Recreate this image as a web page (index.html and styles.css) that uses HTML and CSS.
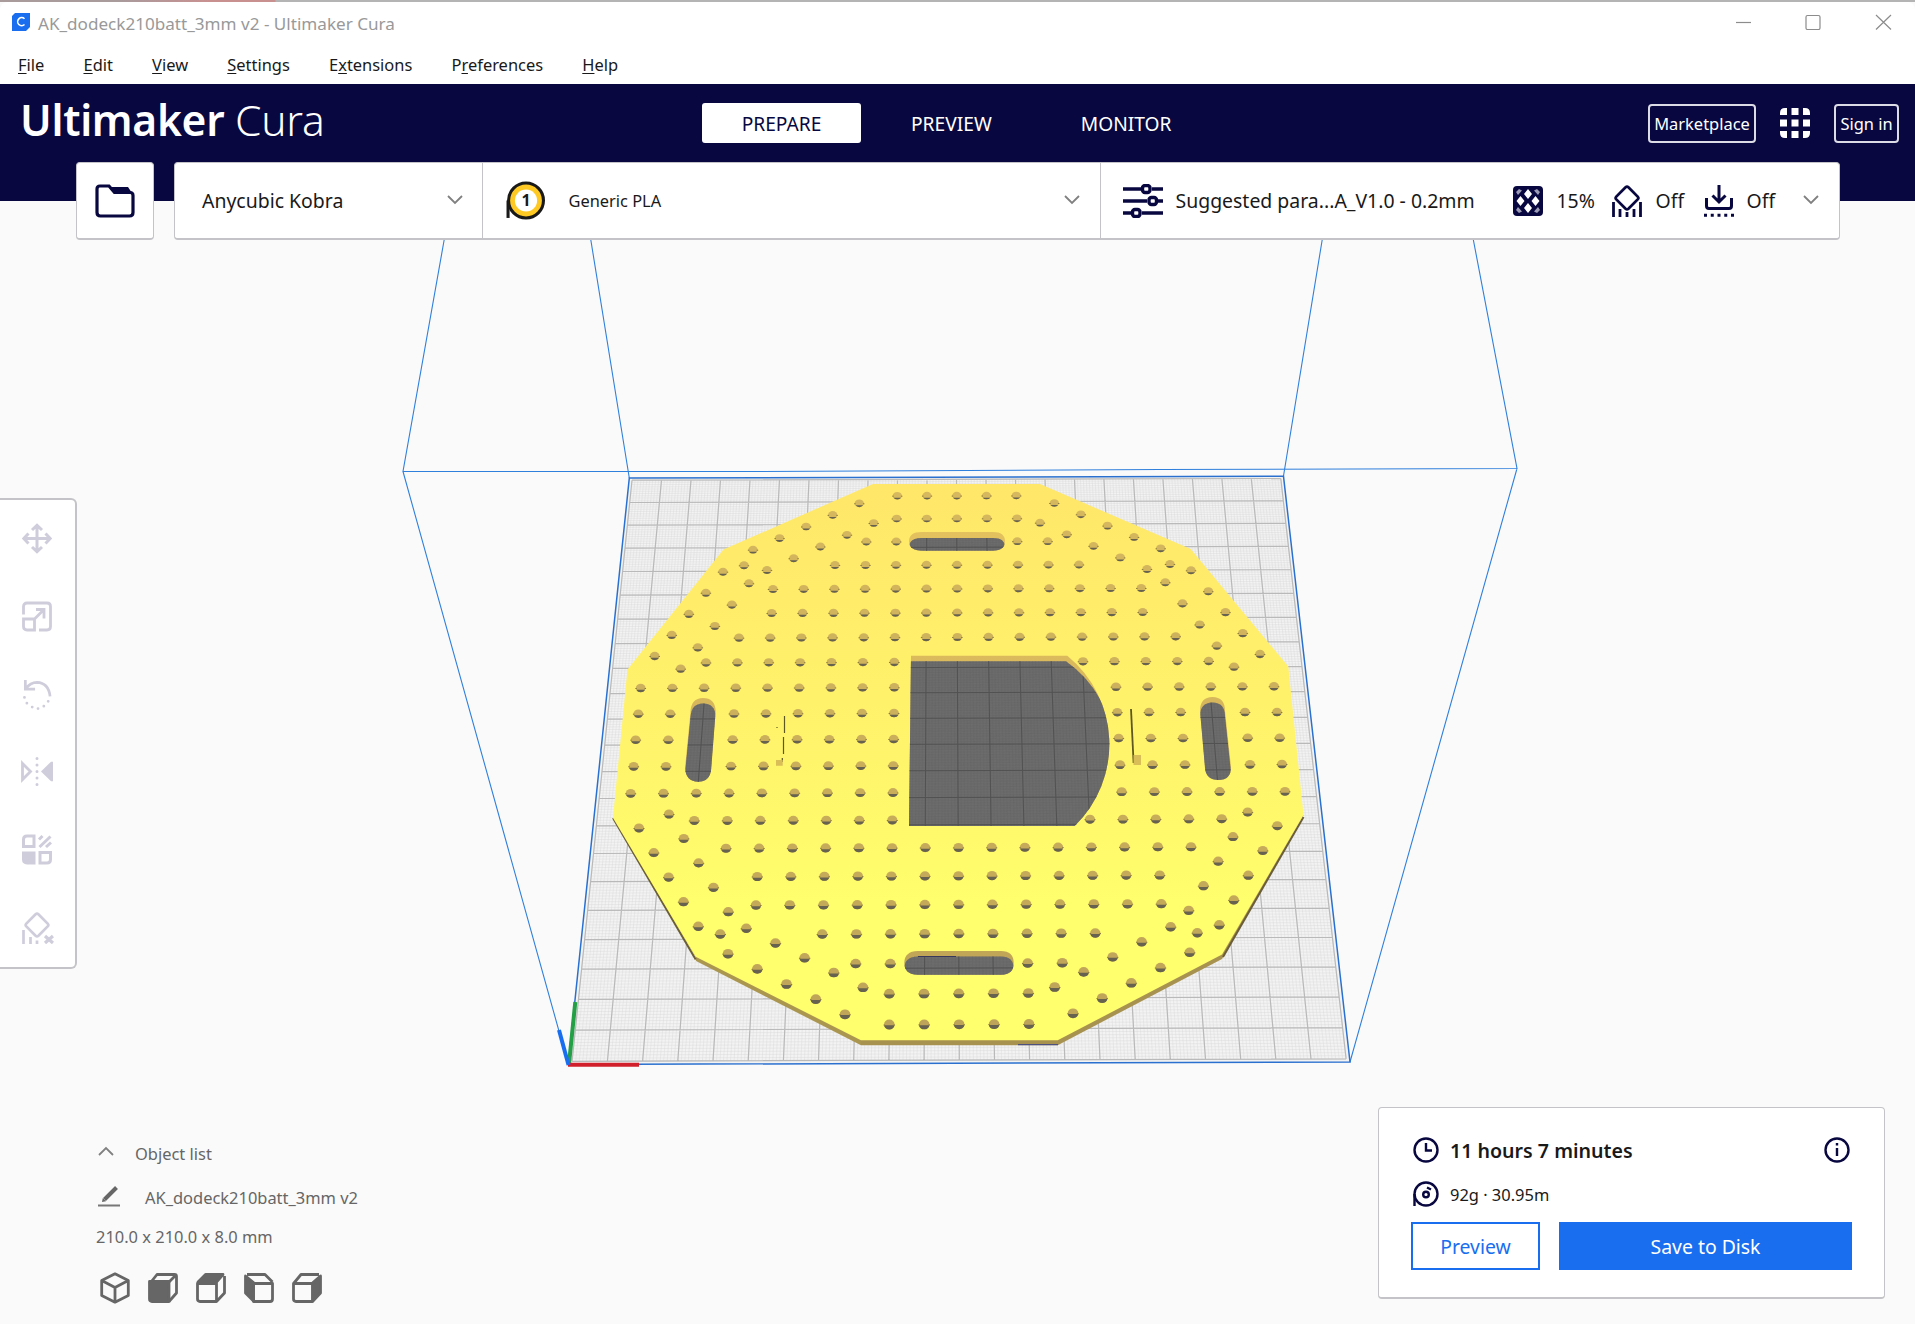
FILE: index.html
```html
<!DOCTYPE html>
<html lang="en">
<head>
<meta charset="utf-8">
<title>AK_dodeck210batt_3mm v2 - Ultimaker Cura</title>
<link rel="stylesheet" href="styles.css">
</head>
<body>
<div class="edge"></div>
<header class="titlebar">
  <svg class="app-icon" viewBox="0 0 18 18"><path d="M3 0H18V14L14 18H0V3Z" fill="#196ef0"/><path d="M12.5 5.8A4 4 0 1 0 12.5 11.5" fill="none" stroke="#fff" stroke-width="1.6"/></svg>
  <span class="window-title">AK_dodeck210batt_3mm v2 - Ultimaker Cura</span>
  <svg class="window-controls" viewBox="0 0 156 16" fill="none" stroke="#8c8c8c" stroke-width="1.2"><path d="M0 8.500H15"/><rect x="70" y="1.500" width="14" height="14" rx="1.5"/><path d="M140 1L155 15.500M155 1L140 15.500"/></svg>
</header>
<nav class="menubar">
  <span><u>F</u>ile</span><span><u>E</u>dit</span><span><u>V</u>iew</span><span><u>S</u>ettings</span><span>E<u>x</u>tensions</span><span>P<u>r</u>eferences</span><span><u>H</u>elp</span>
</nav>
<div class="appbar">
  <div class="logo"><b>Ultimaker</b> <span>Cura</span></div>
  <div class="stages"><span class="stage active">PREPARE</span><span class="stage">PREVIEW</span><span class="stage">MONITOR</span></div>
  <div class="account">
    <span class="outlined market">Marketplace</span>
    <svg class="apps" viewBox="0 0 30 30" fill="#fff"><path d="M0 7V5Q0 0 5 0H7V7ZM11.500 0H18.500V7H11.500ZM23 0H25Q30 0 30 5V7H23ZM0 11.500H7V18.500H0ZM11.500 11.500H18.500V18.500H11.500ZM23 11.500H30V18.500H23ZM0 23H7V30H5Q0 30 0 25ZM11.500 23H18.500V30H11.500ZM23 23H30V25Q30 30 25 30H23Z"/></svg>
    <span class="outlined signin">Sign in</span>
  </div>
</div>
<main class="workspace">
  <svg class="scene" id="scene" viewBox="0 162 1915 1162">
    <defs>
      <linearGradient id="plate" x1="0" y1="484" x2="0" y2="1040" gradientUnits="userSpaceOnUse"><stop offset="0" stop-color="#ffe769"/><stop offset=".5" stop-color="#fff56b"/><stop offset=".75" stop-color="#fffe6c"/><stop offset="1" stop-color="#ffff6d"/></linearGradient>
      <linearGradient id="wall" x1="0" y1="484" x2="0" y2="1040" gradientUnits="userSpaceOnUse"><stop offset="0" stop-color="#e6c55f"/><stop offset=".5" stop-color="#d3b35a"/><stop offset="1" stop-color="#b9a055"/></linearGradient>
      <clipPath id="cutouts">
        <path id="window" d="M911 655.700H1067.300A114 114 0 0 1 1074.700 826H909Z"/>
        <path id="slotTop" d="M922 532H993Q1005 532 1005 541.300T993 550.700H922Q909 550.700 909 541.300T922 532Z"/>
        <path id="slotBottom" d="M918 951H1001Q1013.700 951 1013.700 963T1001 974.700H918Q904.300 974.700 904.300 963T918 951Z"/>
        <path id="slotLeft" d="M690.500 712Q691 698 703 698T715.700 711L711.200 769Q710 781.700 698 781.700T685 768Z"/>
        <path id="slotRight" d="M1200 711Q1200 697 1212.500 697T1225 711L1231 767Q1231 780 1218.500 780T1205 768Z"/>
      </clipPath>
      <clipPath id="floors">
        <path d="M908 661.200H1066A114 114 0 0 1 1076 840H900Z"/>
        <use href="#slotTop" y="6"/><use href="#slotBottom" y="5.500"/><use href="#slotLeft" y="5.500"/><use href="#slotRight" y="5.500"/>
      </clipPath>
    </defs>
    <g id="bed"></g>
    <g fill="none" stroke="#2f7fdc" stroke-width="1.1">
      <path d="M444.500 238L403 471.500H760L1160 469.500L1517 468.500L1473 238M403 471.500L568.300 1064.500M1517 468.500L1350 1062M590.500 238L629.300 478M1322.500 238L1283.500 476"/>
      <path d="M629.300 478L1283.500 476.300L1350 1062L568.300 1064.500Z" stroke="#2a70cf" stroke-width="1.500"/>
    </g>
    <path d="M613 818L695.700 957L861 1040V1045.200H1057.700L1222 959L1303.500 815Z" fill="#a8924f"/>
    <path d="M696 955L861 1038V1045.200L696 961Z" fill="#ab9650"/>
    <path d="M613 818L695.700 959.500M1303.500 817L1223 957" stroke="#6b5e37" stroke-width="2"/>
    <path d="M1018 1044.700H1058" stroke="#38438b"/>
    <path d="M873 484H1040L1190.700 549L1288.300 666.500L1303.500 815L1222 954.500L1057.700 1040.300H861L695.700 956.700L613 818L627.500 669.500L723.500 549.500Z" fill="url(#plate)"/>
    <g fill="url(#wall)"><use href="#window"/><use href="#slotTop"/><use href="#slotBottom"/><use href="#slotLeft"/><use href="#slotRight"/></g>
    <g clip-path="url(#cutouts)">
      <g clip-path="url(#floors)">
        <path d="M680 530H1240V980H680Z" fill="#6c6c6c"/>
        <g id="bedShade"></g>
      </g>
    </g>
    <path d="M918 956.500H956" stroke="#38385a"/>
    <g stroke="#5e5722" stroke-width="1.200"><path d="M784.500 716V733M783.500 737V754M782.300 758V762M777 727V728"/><path d="M1131 709L1133.600 763" stroke-width="1.800"/></g>
    <path d="M776 760H782.700V765.700H776ZM1133.500 755H1141V765H1133.500Z" fill="#d9bd57"/>
    <g id="holes"></g>
    <g fill="none" stroke-width="4"><path d="M569 1064L575.300 1002" stroke="#23a045"/><path d="M568 1064.700H639" stroke="#d1202c"/><path d="M568.500 1065L559 1030" stroke="#196ef0"/></g>
  </svg>

  <div class="config-row">
    <div class="card folder"><svg viewBox="0 0 40 34" fill="none" stroke="#08073f" stroke-width="3.200"><path d="M5 2H14L19.500 8.500H35Q38 8.500 38 11.500V28.500Q38 32 34.500 32H5.500Q2 32 2 28.500V5Q2 2 5 2Z"/><path d="M12 1L20 9H37L33 3H15Z" fill="#08073f" stroke="none"/></svg></div>
    <div class="card config">
      <div class="cell printer"><span>Anycubic Kobra</span><svg class="chevron" viewBox="0 0 16 10"><path d="M1 1L8 8L15 1"/></svg></div>
      <div class="cell material">
        <svg class="spool" viewBox="0 0 38 38"><path d="M2 36V19" stroke="#191919" stroke-width="3"/><circle cx="19.500" cy="19" r="17" fill="#ffc924" stroke="#191919" stroke-width="3"/><circle cx="19.500" cy="19" r="10.800" fill="#fff"/><text x="19.500" y="24.500" text-anchor="middle">1</text></svg>
        <span>Generic PLA</span><svg class="chevron" viewBox="0 0 16 10"><path d="M1 1L8 8L15 1"/></svg>
      </div>
      <div class="cell settings">
        <svg class="sliders" viewBox="0 0 40 34" fill="none" stroke="#08073f" stroke-width="3.400"><path d="M0 5H18M29 5H40M0 17H24M35 17H40M0 29H8M19 29H40"/><rect x="19.500" y="1.500" width="7.500" height="7" rx="2.500"/><rect x="26" y="13.500" width="7.500" height="7" rx="2.500"/><rect x="9.500" y="25.500" width="7.500" height="7" rx="2.500"/></svg>
        <span class="profile">Suggested para...A_V1.0 - 0.2mm</span>
        <svg class="ic infill" viewBox="0 0 30 30"><rect width="30" height="30" rx="4" fill="#08073f"/><path d="M15 3L19 8L15 13L11 8ZM15 17L19 22L15 27L11 22ZM7.500 10L11.500 15L7.500 20L3.500 15ZM22.500 10L26.500 15L22.500 20L18.500 15Z" fill="#fff"/><path d="M6 3L9 4.500L5 9L3 6ZM24 3L21 4.500L25 9L27 6ZM6 27L9 25.500L5 21L3 24ZM24 27L21 25.500L25 21L27 24Z" fill="#9c9bb5"/></svg>
        <span class="v1">15%</span>
        <svg class="ic support" viewBox="0 0 30 32" fill="none" stroke="#08073f" stroke-width="2.800"><path d="M13.600 2.300Q15 1 16.400 2.300L25.700 11.600Q27 13 25.700 14.400L16.400 23.700Q15 25 13.600 23.700L4.300 14.400Q3 13 4.300 11.600Z"/><path d="M1.500 17V32M8 24V32M15 27V32M22 24V32M28.500 17V32"/></svg>
        <span class="v2">Off</span>
        <svg class="ic adhesion" viewBox="0 0 30 32" fill="none" stroke="#08073f" stroke-width="3"><path d="M15 0V16M8.500 10.500L15 17L21.500 10.500M2.500 13V21Q2.500 23.500 5 23.500H25Q27.500 23.500 27.500 21V13"/><path d="M0 30.300H30" stroke-dasharray="3 3.750"/></svg>
        <span class="v3">Off</span>
        <svg class="chevron" viewBox="0 0 16 10"><path d="M1 1L8 8L15 1"/></svg>
      </div>
    </div>
  </div>

  <aside class="tools">
    <svg viewBox="0 0 30 30" fill="none" stroke="#cfcddb" stroke-width="3"><path d="M15 3V27M3 15H27M10 6.500L15 1.800L20 6.500M10 23.500L15 28.200L20 23.500M6.500 10L1.800 15L6.500 20M23.500 10L28.200 15L23.500 20"/></svg>
    <svg viewBox="0 0 30 30" fill="none" stroke="#cfcddb" stroke-width="2.800"><path d="M1.500 13V5Q1.500 1.500 5 1.500H25Q28.500 1.500 28.500 5V25Q28.500 28.500 25 28.500H17"/><path d="M1.500 17.500H12.500V28.500H5Q1.500 28.500 1.500 25ZM13 17L22 8M14 8H22V17"/></svg>
    <svg viewBox="0 0 30 32" fill="none" stroke="#cfcddb" stroke-width="2.800"><path d="M3 1V10.500H13M3.500 10Q8 3.500 15 3.500Q27 4 28.500 18"/><path d="M2 19H2.100M4.500 25H4.600M10 29H10.100M16 30.500H16.100M22 28H22.100M26.500 23H26.600" stroke-linecap="round"/></svg>
    <svg viewBox="0 0 34 30" class="wide"><path d="M2.500 7L10.500 15L2.500 23Z" fill="none" stroke="#cfcddb" stroke-width="2.800"/><path d="M21 15L31 5.200H33V24.800H31Z" fill="#cfcddb"/><path d="M17 2V2.100M17 8.500V8.600M17 15V15.100M17 21.500V21.600M17 28V28.100" stroke="#cfcddb" stroke-width="3" stroke-linecap="round"/></svg>
    <svg viewBox="0 0 30 30" fill="none" stroke="#cfcddb" stroke-width="3"><path d="M1.500 12V5Q1.500 1.500 5 1.500H12V12ZM18 18H28.500V25Q28.500 28.500 25 28.500H18ZM17 5L20.500 1.500M17.500 12.500L28.500 2M24 12.500L29 8"/><path d="M0 17H13.500V30H5Q0 29.500 0 25Z" fill="#cfcddb" stroke="none"/></svg>
    <svg viewBox="0 0 32 32" class="blocker" fill="none" stroke="#cfcddb" stroke-width="2.700"><path d="M13.600 2.300Q15 1 16.400 2.300L25.700 11.600Q27 13 25.700 14.400L16.400 23.700Q15 25 13.600 23.700L4.300 14.400Q3 13 4.300 11.600Z"/><path d="M1.500 18V32M8.500 25V32M15 28.500V32"/><path d="M23 24L31 31M31 24L23 31" stroke-width="3.300"/></svg>
  </aside>

  <div class="bottom">
    <section class="objects">
      <div class="line list"><svg class="chevron" viewBox="0 0 16 10"><path d="M1 9L8 2L15 9"/></svg><span>Object list</span></div>
      <div class="line name"><svg viewBox="0 0 22 22"><path d="M6.500 14.500L18.500 2.500" stroke="#666" stroke-width="4"/><path d="M4 17L4.800 13L8 16.200Z" fill="#666"/><path d="M0 20.500H22" stroke="#777" stroke-width="2"/></svg><span>AK_dodeck210batt_3mm v2</span></div>
      <div class="line dims">210.0 x 210.0 x 8.0 mm</div>
      <div class="views">
        <svg viewBox="0 0 30 32"><path d="M15 1.800L28.300 8.500V23.500L15 30.200L1.700 23.500V8.500ZM1.700 8.500L15 15.500L28.300 8.500M15 15.500V30"/></svg>
        <svg viewBox="0 0 30 32"><path d="M3 10L9 2.500H26.500Q28.500 2.500 28.500 4.500V21L21 29.500M21 10L28 3"/><path d="M1.500 9.500H21V29.500H4Q1.500 29.500 1.500 27Z" fill="#666"/></svg>
        <svg viewBox="0 0 30 32"><path d="M1.500 11.500H20.500V29.500H4Q1.500 29.500 1.500 27ZM20.500 29.500L28.500 21V4"/><path d="M2 10L9.500 2.500H27L20.500 10Z" fill="#666"/></svg>
        <svg viewBox="0 0 30 32"><path d="M9.500 11.500H28.500V27Q28.500 29.500 26 29.500H9.500ZM3 2.500H21L28.500 10"/><path d="M1.500 4L9.500 10.500V29L1.500 21Z" fill="#666"/></svg>
        <svg viewBox="0 0 30 32"><path d="M1.500 11.500H20.500V29.500H4Q1.500 29.500 1.500 27ZM2 11L9 2.500H27"/><path d="M28.500 4L21 10.500V29L28.500 21Z" fill="#666"/></svg>
      </div>
    </section>
    <section class="card summary">
      <div class="info time"><svg viewBox="0 0 26 26"><circle cx="13" cy="13" r="11.500"/><path d="M13 6V13.500H19"/></svg><strong>11 hours 7 minutes</strong><svg class="about" viewBox="0 0 26 26"><circle cx="13" cy="13" r="11.500"/><path d="M13 11V19M13 6V8.500"/></svg></div>
      <div class="info usage"><svg viewBox="0 0 26 26"><circle cx="13" cy="13" r="11.500"/><path d="M1.500 13V25M14 6.500L18 8.500"/><circle cx="13" cy="13.500" r="2.800"/></svg><span>92g · 30.95m</span></div>
      <div class="actions"><span class="button preview">Preview</span><span class="button save">Save to Disk</span></div>
    </section>
  </div>
</main>
<script src="scene.js"></script>
</body>
</html>
```
FILE: styles.css
```css
* { box-sizing: border-box; }
body {
  margin: 0;
  width: 1915px;
  height: 1324px;
  overflow: hidden;
  display: flex;
  flex-direction: column;
  background: #fafafa;
  color: #191919;
  font-family: "Noto Sans", "Open Sans", sans-serif;
  font-size: 16.45px;
  white-space: nowrap;
}
svg { flex: none; display: block; }
.edge { height: 2px; background: linear-gradient(90deg, #a99a9c 0 120px, #c99090 210px 275px, #b4b4b4 276px); }
.titlebar { height: 44px; background: #fff; display: flex; align-items: center; padding: 0 23px 0 12px; border-radius: 8px 8px 0 0; }
.app-icon { width: 18px; height: 18px; margin-top: -4px; }
.window-title { margin: -1px 0 0 8px; color: #999; font-size: 17.1px; }
.window-controls { width: 156px; height: 16px; margin: -4px 0 0 auto; }
.menubar { height: 38px; background: #fff; display: flex; align-items: center; gap: 39.2px; padding: 0 18px 1px; }
.menubar u { text-underline-offset: 2px; text-decoration-thickness: 1px; text-decoration-skip-ink: none; }
.appbar { height: 78px; background: #08073f; color: #fff; display: grid; grid-template-columns: 702px 1fr auto; align-items: center; padding-right: 16px; }
.logo { padding-left: 20px; font-size: 42.5px; line-height: 60px; margin-top: -6px; letter-spacing: -.3px; font-weight: 300; }
.logo b { font-weight: 600; }
.stages { display: flex; gap: 50px; font-size: 19.2px; }
.stage { height: 40px; line-height: 41px; }
.stage.active { width: 159px; text-align: center; background: #fff; color: #08073f; border-radius: 3px; }
.stage + .stage + .stage { margin-left: 39px; }
.account { display: flex; align-items: center; }
.outlined { height: 39px; border: 2px solid #dcdce6; border-radius: 4px; line-height: 36px; text-align: center; }
.market { width: 108px; }
.signin { width: 65px; }
.apps { width: 30px; height: 30px; margin: 0 24px; }
.workspace { position: relative; height: 1162px; display: flex; flex-direction: column; background: linear-gradient(#08073f 39px, #fafafa 39px); }
.scene { position: absolute; left: 0; top: 0; width: 1915px; height: 1162px; }
.card { background: #fff; border: 1.5px solid #c4c4c8; border-bottom-width: 2px; border-radius: 4px; }
.config-row { position: relative; display: flex; gap: 19.5px; padding: 0 75px 0 76px; height: 78px; }
.folder { width: 78px; display: flex; align-items: center; justify-content: center; }
.folder svg { width: 40px; height: 34px; }
.config { flex: 1; display: flex; font-size: 19.45px; }
.cell { display: flex; align-items: center; }
.cell + .cell { border-left: 1px solid #c4c4c8; }
.chevron { width: 16px; height: 10px; fill: none; stroke: #808080; stroke-width: 1.8; }
.cell .chevron { margin-left: auto; margin-top: -2px; }
.printer { width: 307px; padding: 0 19px 0 27.500px; }
.material { width: 618px; padding: 0 20px 0 23px; font-size: 16.4px; }
.spool { width: 39px; height: 39px; margin-right: 24px; }
.spool text { font: bold 15.500px "Noto Sans", sans-serif; fill: #191919; }
.settings { flex: 1; padding: 0 20px 0 22px; }
.sliders { width: 40px; height: 34px; margin-right: 13px; }
.profile { width: 301px; }
.ic { width: 30px; height: 32px; }
.infill { margin-left: 36px; margin-right: 14px; }
.v1 { width: 55px; }
.support { margin-right: 14px; }
.v2 { width: 48px; }
.adhesion { margin-right: 13px; }
.tools { position: relative; margin-top: 258px; width: 77px; height: 471px; background: #fff; border: 2px solid #c4c4c8; border-left: 0; border-radius: 0 6px 6px 0; padding: 23px 0 23px 22px; display: flex; flex-direction: column; justify-content: space-between; }
.tools svg { width: 30px; height: 31px; }
.tools .wide { width: 34px; margin-left: -2px; }
.tools .blocker { width: 32px; height: 32px; }
.bottom { position: relative; flex: 1; display: flex; justify-content: space-between; align-items: flex-start; padding: 138px 30px 0 96px; color: #666; }
.objects { padding-top: 34px; }
.line { display: flex; align-items: center; height: 24px; }
.list { padding-left: 2px; gap: 21px; }
.list .chevron { margin-top: -4px; }
.name { margin-top: 20px; padding-left: 2px; gap: 25px; }
.name svg { width: 22px; height: 22px; margin-top: -2px; }
.dims { margin-top: 15px; }
.views { display: flex; gap: 18px; margin: 24px 0 0 4px; }
.views svg { width: 30px; height: 32px; fill: none; stroke: #666; stroke-width: 2.8; stroke-linejoin: round; }
.summary { width: 507px; height: 192px; padding: 28px 32px 0; color: #191919; }
.info { display: flex; align-items: center; gap: 11px; padding-left: 2px; height: 28px; }
.info svg { width: 26px; height: 26px; fill: none; stroke: #08073f; stroke-width: 2.4; }
.info strong { font-size: 19.6px; font-weight: 600; }
.info .about { margin-left: auto; margin-right: 2px; }
.usage { margin-top: 16px; }
.actions { display: flex; gap: 19px; margin-top: 14px; }
.button { height: 48px; line-height: 46px; text-align: center; font-size: 19.400px; }
.preview { width: 129px; border: 2px solid #196ef0; color: #196ef0; }
.save { flex: 1; line-height: 49px; background: #196ef0; color: #fff; }
```
FILE: scene.js
```js
const make = (markup, id) => { document.getElementById(id).innerHTML = markup; };

// Perspective map from bed millimetres (222 x 222) to the viewport.
const BED = 222;
const [p0, p1, p2, p3] = [[629.3, 478], [1283.5, 476.3], [1350, 1062], [568.3, 1064.5]];
const sx = p0[0] - p1[0] + p2[0] - p3[0], sy = p0[1] - p1[1] + p2[1] - p3[1];
const dx1 = p1[0] - p2[0], dy1 = p1[1] - p2[1], dx2 = p3[0] - p2[0], dy2 = p3[1] - p2[1];
const det = dx1 * dy2 - dx2 * dy1;
const g = (sx * dy2 - dx2 * sy) / det, h = (dx1 * sy - sx * dy1) / det;
const project = (x, y) => {
  const u = x / BED, v = y / BED, w = g * u + h * v + 1;
  return [
    ((p1[0] - p0[0] + g * p1[0]) * u + (p3[0] - p0[0] + h * p3[0]) * v + p0[0]) / w,
    ((p1[1] - p0[1] + g * p1[1]) * u + (p3[1] - p0[1] + h * p3[1]) * v + p0[1]) / w
  ].map(n => n.toFixed(1));
};
const lines = step => {
  let d = "";
  for (let m = 1; m <= 221; m += step) {
    d += `M${project(m, 1)}L${project(m, 221)}M${project(1, m)}L${project(221, m)}`;
  }
  return d;
};
const minor = lines(1), major = lines(10);
make(`<path d="M${p0}L${p1}L${p2}L${p3}Z" fill="#f3f3f3"/>
  <path d="${minor}" stroke="#d6d6d6" stroke-width=".4" fill="none"/>
  <path d="${major}" stroke="#b9b9b9" stroke-width="1.2" fill="none"/>`, "bed");
make(`<path d="${minor}" stroke="#606060" stroke-width=".25" fill="none"/>
  <path d="${major}" stroke="#525252" stroke-width="1" fill="none"/>`, "bedShade");

// Evenly spaced runs of holes: [count, x first, y first, x last, y last].
const runs = [
  [5, 897.3, 495.7, 1016.3, 495.500], [5, 896.7, 518.5, 1017, 518.3],
  [2, 866.3, 541.500, 896.3, 541.500], [2, 1017.3, 541.2, 1047.7, 541.2],
  [9, 835, 565, 1079, 564.5], [13, 773, 589, 1141.3, 588], [13, 771.7, 613, 1142.7, 612],
  [15, 739, 637.7, 1175.7, 636.3], [7, 706, 662.5, 894.3, 662], [5, 1083, 661.3, 1208.7, 661],
  [9, 640.7, 688, 894.3, 687.3], [6, 1116, 686.7, 1274, 686.3],
  [2, 638.3, 713.7, 670.3, 713.7], [6, 734, 713.500, 894, 713], [3, 1117.3, 712.2, 1180.7, 712], [2, 1245, 712, 1277, 712],
  [2, 635.7, 739.7, 668.3, 739.7], [6, 732.7, 739.500, 893.7, 739], [3, 1118.7, 738, 1183, 738], [2, 1247.7, 737.7, 1279.7, 737.7],
  [2, 633.7, 766.3, 666, 766.3], [6, 731, 766, 893.3, 765.5], [3, 1120, 764.7, 1185, 764.5], [2, 1250, 764.3, 1282, 764],
  [9, 630.7, 793.3, 893, 792.5], [6, 1121.7, 791.7, 1285, 791.3],
  [7, 694.3, 820.5, 892.3, 820], [5, 1090, 819.2, 1221.7, 818.7],
  [15, 726, 848.2, 1191, 846.7], [13, 757.3, 876.500, 1159.7, 875], [13, 756, 905, 1161.3, 903.7],
  [9, 822.3, 934, 1095.3, 933], [2, 855.7, 963.500, 890.3, 963.500], [2, 1027.7, 963, 1062.3, 962.7],
  [5, 889.3, 993.7, 1028.3, 993], [5, 889.3, 1024.500, 1029, 1024],
  [5, 859.3, 503.3, 753, 549.7], [5, 873.7, 523, 767, 570], [1, 744, 565.3, 744, 565.3],
  [5, 723, 571.7, 654.7, 656], [5, 749, 583.3, 680.7, 668.7],
  [5, 1054.3, 503, 1160.7, 548.3], [5, 1040, 522.7, 1147, 569], [1, 1170, 564, 1170, 564],
  [5, 1191, 570.3, 1260, 654], [5, 1165.3, 582.3, 1234, 666.7],
  [5, 639, 828, 698.3, 926.3], [5, 669, 814, 728.3, 911.7], [1, 720.3, 934, 720.3, 934],
  [5, 728, 953.7, 845, 1014.3], [5, 746.3, 928.3, 863, 987.3],
  [5, 1277.3, 825.7, 1219.3, 924.7], [5, 1247.7, 812, 1188.7, 910.3], [1, 1197.3, 932.7, 1197.3, 932.7],
  [5, 1189.7, 952.3, 1073, 1013.3], [5, 1170.7, 926.7, 1054.7, 987]
];
let holes = "";
for (const [n, x0, y0, x1, y1] of runs) {
  for (let i = 0; i < n; i++) {
    const t = n > 1 ? i / (n - 1) : 0;
    const x = x0 + (x1 - x0) * t, y = y0 + (y1 - y0) * t;
    const k = (y - 490) / 540;
    const rx = 4.6 + k * 0.7, ry = 3.8 + k * 1.1;
    const fill = `rgb(${214 - k * 24},${184 - k * 20},${94 - k * 6})`;
    const floor = ry * (0.55 - k * 0.4);
    const half = rx * Math.sqrt(1 - (floor / ry) ** 2);
    holes += `<ellipse cx="${x.toFixed(1)}" cy="${y.toFixed(1)}" rx="${rx}" ry="${ry}" fill="${fill}"/>`
      + `<path d="M${x - half} ${y + floor}A${rx} ${ry} 0 0 0 ${x + half} ${y + floor}Z" fill="#66624f"/>`
      + `<path d="M${x - rx - .5} ${y + .5}h1.500M${x + rx - 1} ${y + .5}h1.500" stroke="#8d7d3e"/>`;
  }
}
make(holes, "holes");
```
